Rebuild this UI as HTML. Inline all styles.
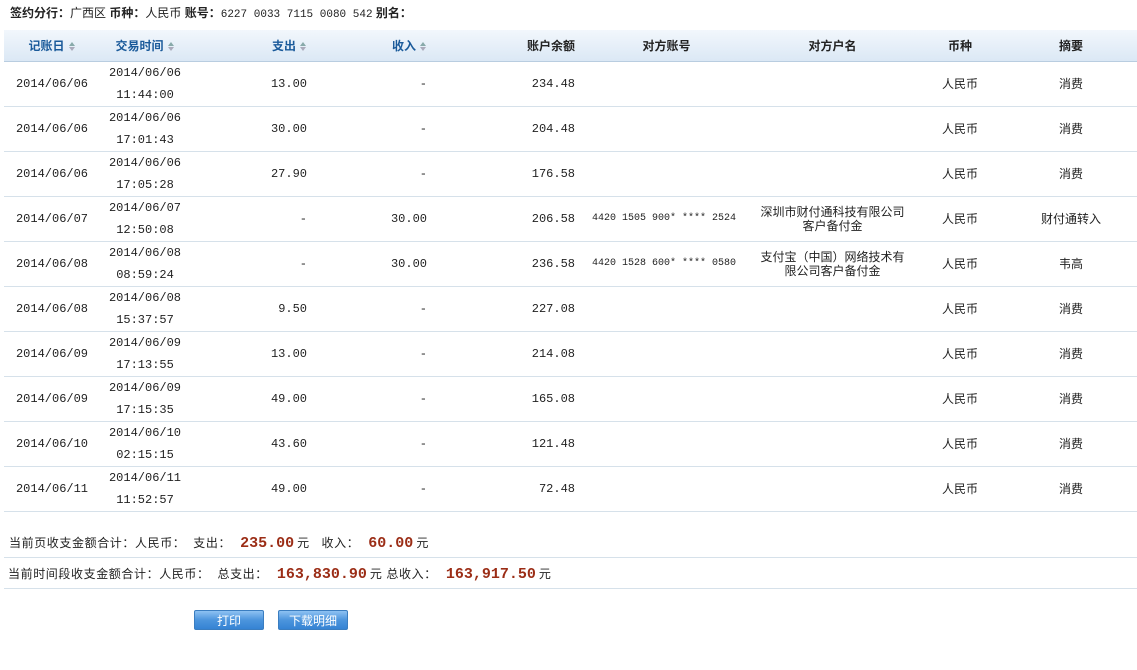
<!DOCTYPE html>
<html><head><meta charset="utf-8"><style>
body{margin:0;background:#fff;font-family:"Liberation Sans","Noto Sans CJK SC",sans-serif;font-size:12px;color:#222;width:1137px;height:670px;overflow:hidden;position:relative}
.top{position:absolute;left:10px;top:4px;font-size:12px}
.top b{font-weight:bold}
.mono{font-family:"Liberation Mono","Noto Sans CJK SC",monospace}
table{position:absolute;left:4px;top:30px;width:1133px;border-collapse:collapse;table-layout:fixed}
th{height:31px;background:linear-gradient(#f2f7fc,#dbe8f5);color:#1a5a9a;font-weight:bold;border-bottom:1px solid #b9cde0;padding:0}
th.k{color:#222}
td{height:44px;border-bottom:1px solid #d6e1ea;padding:0;line-height:22px;white-space:nowrap}
.c{text-align:center}.r{text-align:right}.l{text-align:left}
.ar{display:inline-block;width:7px;height:9px;vertical-align:middle;margin-left:4px;position:relative}
.ar:before{content:"";position:absolute;left:0;top:0;border:3.5px solid transparent;border-bottom:4px solid #8aa;border-top:0}
.ar:after{content:"";position:absolute;left:0;top:5px;border:3.5px solid transparent;border-top:4px solid #aab;border-bottom:0}
.nm{line-height:14px}
.acc{font-family:"Liberation Mono",monospace;font-size:10px;padding-left:9px}
.sum{position:absolute;left:4px;width:1133px;height:30px;border-bottom:1px solid #d6e1ea;line-height:30px;padding-left:5px;box-sizing:border-box;letter-spacing:0.6px}
.amt{font-family:"Liberation Mono","Liberation Serif",monospace;font-weight:bold;font-size:15px;color:#9b2d16;margin:0 3px 0 9px;letter-spacing:0}
.btn{position:absolute;top:610px;height:20px;width:70px;border:1px solid #3a7dc0;border-radius:2px;background:linear-gradient(#8ec2f2,#4c95dd 50%,#3583d4);color:#fff;text-align:center;line-height:20px;font-size:12px;box-sizing:border-box}
</style></head><body>
<div class="top"><b>签约分行：</b>广西区 <b>币种：</b>人民币 <b>账号：</b><span class="mono" style="font-size:11px">6227 0033 7115 0080 542</span> <b>别名：</b></div>
<table>
<colgroup><col style="width:96px"><col style="width:90px"><col style="width:125px"><col style="width:120px"><col style="width:148px"><col style="width:167px"><col style="width:165px"><col style="width:90px"><col style="width:132px"></colgroup>
<tr><th class="c">记账日<span class="ar"></span></th><th class="c">交易时间<span class="ar"></span></th><th class="r" style="padding-right:8px">支出<span class="ar"></span></th><th class="r" style="padding-right:8px">收入<span class="ar"></span></th><th class="r k" style="padding-right:8px">账户余额</th><th class="c k">对方账号</th><th class="c k">对方户名</th><th class="c k">币种</th><th class="c k">摘要</th></tr>
<tr><td class="c mono">2014/06/06</td><td class="c mono">2014/06/06<br>11:44:00</td><td class="r mono" style="padding-right:8px">13.00</td><td class="r mono" style="padding-right:8px">-</td><td class="r mono" style="padding-right:8px">234.48</td><td></td><td></td><td class="c">人民币</td><td class="c">消费</td></tr>
<tr><td class="c mono">2014/06/06</td><td class="c mono">2014/06/06<br>17:01:43</td><td class="r mono" style="padding-right:8px">30.00</td><td class="r mono" style="padding-right:8px">-</td><td class="r mono" style="padding-right:8px">204.48</td><td></td><td></td><td class="c">人民币</td><td class="c">消费</td></tr>
<tr><td class="c mono">2014/06/06</td><td class="c mono">2014/06/06<br>17:05:28</td><td class="r mono" style="padding-right:8px">27.90</td><td class="r mono" style="padding-right:8px">-</td><td class="r mono" style="padding-right:8px">176.58</td><td></td><td></td><td class="c">人民币</td><td class="c">消费</td></tr>
<tr><td class="c mono">2014/06/07</td><td class="c mono">2014/06/07<br>12:50:08</td><td class="r mono" style="padding-right:8px">-</td><td class="r mono" style="padding-right:8px">30.00</td><td class="r mono" style="padding-right:8px">206.58</td><td class="acc">4420 1505 900* **** 2524</td><td class="c nm">深圳市财付通科技有限公司<br>客户备付金</td><td class="c">人民币</td><td class="c">财付通转入</td></tr>
<tr><td class="c mono">2014/06/08</td><td class="c mono">2014/06/08<br>08:59:24</td><td class="r mono" style="padding-right:8px">-</td><td class="r mono" style="padding-right:8px">30.00</td><td class="r mono" style="padding-right:8px">236.58</td><td class="acc">4420 1528 600* **** 0580</td><td class="c nm">支付宝（中国）网络技术有<br>限公司客户备付金</td><td class="c">人民币</td><td class="c">韦高</td></tr>
<tr><td class="c mono">2014/06/08</td><td class="c mono">2014/06/08<br>15:37:57</td><td class="r mono" style="padding-right:8px">9.50</td><td class="r mono" style="padding-right:8px">-</td><td class="r mono" style="padding-right:8px">227.08</td><td></td><td></td><td class="c">人民币</td><td class="c">消费</td></tr>
<tr><td class="c mono">2014/06/09</td><td class="c mono">2014/06/09<br>17:13:55</td><td class="r mono" style="padding-right:8px">13.00</td><td class="r mono" style="padding-right:8px">-</td><td class="r mono" style="padding-right:8px">214.08</td><td></td><td></td><td class="c">人民币</td><td class="c">消费</td></tr>
<tr><td class="c mono">2014/06/09</td><td class="c mono">2014/06/09<br>17:15:35</td><td class="r mono" style="padding-right:8px">49.00</td><td class="r mono" style="padding-right:8px">-</td><td class="r mono" style="padding-right:8px">165.08</td><td></td><td></td><td class="c">人民币</td><td class="c">消费</td></tr>
<tr><td class="c mono">2014/06/10</td><td class="c mono">2014/06/10<br>02:15:15</td><td class="r mono" style="padding-right:8px">43.60</td><td class="r mono" style="padding-right:8px">-</td><td class="r mono" style="padding-right:8px">121.48</td><td></td><td></td><td class="c">人民币</td><td class="c">消费</td></tr>
<tr><td class="c mono">2014/06/11</td><td class="c mono">2014/06/11<br>11:52:57</td><td class="r mono" style="padding-right:8px">49.00</td><td class="r mono" style="padding-right:8px">-</td><td class="r mono" style="padding-right:8px">72.48</td><td></td><td></td><td class="c">人民币</td><td class="c">消费</td></tr>
</table>
<div class="sum" style="top:528px">当前页收支金额合计：人民币：&nbsp; 支出：<span class="amt">235.00</span>元 &nbsp; 收入：<span class="amt">60.00</span>元</div>
<div class="sum" style="top:559px;padding-left:4px">当前时间段收支金额合计：人民币：&nbsp; 总支出：<span class="amt">163,830.90</span>元 总收入：<span class="amt">163,917.50</span>元</div>
<div class="btn" style="left:194px">打印</div>
<div class="btn" style="left:278px">下载明细</div>
</body></html>
